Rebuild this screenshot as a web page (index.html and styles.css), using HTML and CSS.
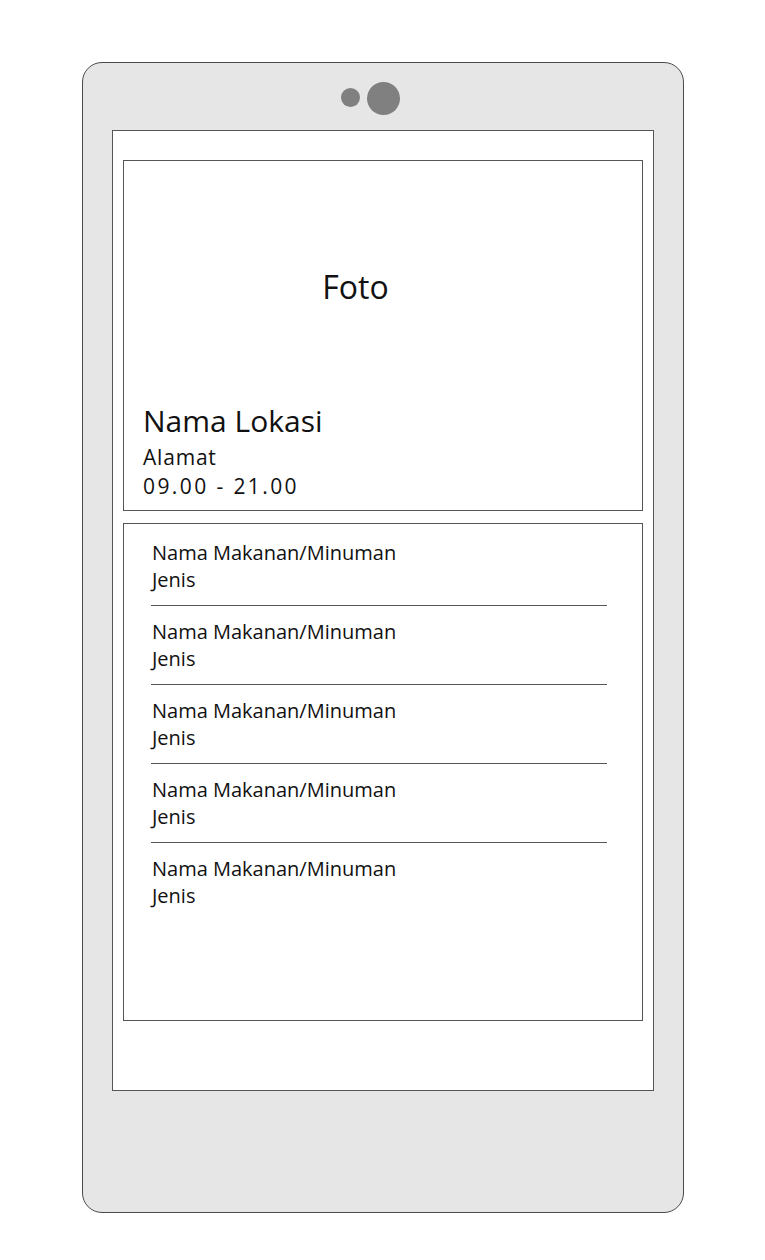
FILE: index.html
```html
<!DOCTYPE html>
<html lang="id">
<head>
<meta charset="utf-8">
<title>Detail Lokasi</title>
<link rel="stylesheet" href="styles.css">
</head>
<body>
<div class="phone">
  <div class="camera">
    <span class="dot dot-small"></span>
    <span class="dot dot-large"></span>
  </div>
  <div class="screen">
    <section class="photo-card">
      <div class="photo-label">Foto</div>
      <div class="place">
        <div class="place-name">Nama Lokasi</div>
        <div class="place-line place-address">Alamat</div>
        <div class="place-line place-hours">09.00 - 21.00</div>
      </div>
    </section>
    <section class="menu-card">
      <div class="menu-item">
        <div class="item-name">Nama Makanan/Minuman</div>
        <div class="item-type">Jenis</div>
      </div>
      <div class="menu-item">
        <div class="item-name">Nama Makanan/Minuman</div>
        <div class="item-type">Jenis</div>
      </div>
      <div class="menu-item">
        <div class="item-name">Nama Makanan/Minuman</div>
        <div class="item-type">Jenis</div>
      </div>
      <div class="menu-item">
        <div class="item-name">Nama Makanan/Minuman</div>
        <div class="item-type">Jenis</div>
      </div>
      <div class="menu-item last">
        <div class="item-name">Nama Makanan/Minuman</div>
        <div class="item-type">Jenis</div>
      </div>
    </section>
  </div>
</div>
</body>
</html>
```

FILE: styles.css
```css
* { box-sizing: border-box; }

html, body {
  margin: 0;
  padding: 0;
  background: #ffffff;
}

body {
  font-family: "Open Sans", "Noto Sans", sans-serif;
  color: #111;
}

.phone {
  margin: 62px 0 0 82px;
  width: 602px;
  height: 1151px;
  background: #e6e6e6;
  border: 1px solid #4a4a4a;
  border-radius: 20px;
  padding: 0 29px;
  display: flex;
  flex-direction: column;
}

.camera {
  height: 67px;
  display: flex;
  justify-content: center;
  align-items: center;
  gap: 7px;
  padding-right: 26px;
  padding-top: 2px;
}

.dot {
  display: block;
  border-radius: 50%;
  background: #808080;
}

.dot-small { width: 19px; height: 19px; }
.dot-large { width: 33px; height: 33px; margin-top: 1px; }

.screen {
  width: 542px;
  height: 961px;
  background: #ffffff;
  border: 1px solid #555;
  padding: 29px 10px 0 10px;
  display: flex;
  flex-direction: column;
  gap: 12px;
}

.photo-card {
  height: 351px;
  border: 1px solid #555;
  display: flex;
  flex-direction: column;
}

.photo-label {
  flex: 1;
  display: flex;
  align-items: center;
  justify-content: center;
  font-size: 32px;
  padding-top: 12px;
  padding-right: 55px;
}

.place {
  padding: 0 0 9px 19px;
}

.place-name {
  font-size: 30px;
  line-height: 44px;
}

.place-line {
  line-height: 29px;
}

.place-address {
  font-size: 21px;
  letter-spacing: 0.8px;
}

.place-hours {
  font-size: 21px;
  letter-spacing: 2.4px;
}

.menu-card {
  height: 498px;
  border: 1px solid #555;
  padding: 3px 35px 0 27px;
}

.menu-item {
  padding: 12px 0 12px 1px;
  border-bottom: 1px solid #555;
}

.menu-item.last { border-bottom: none; }

.item-name,
.item-type {
  font-size: 20px;
  line-height: 27px;
}
```
